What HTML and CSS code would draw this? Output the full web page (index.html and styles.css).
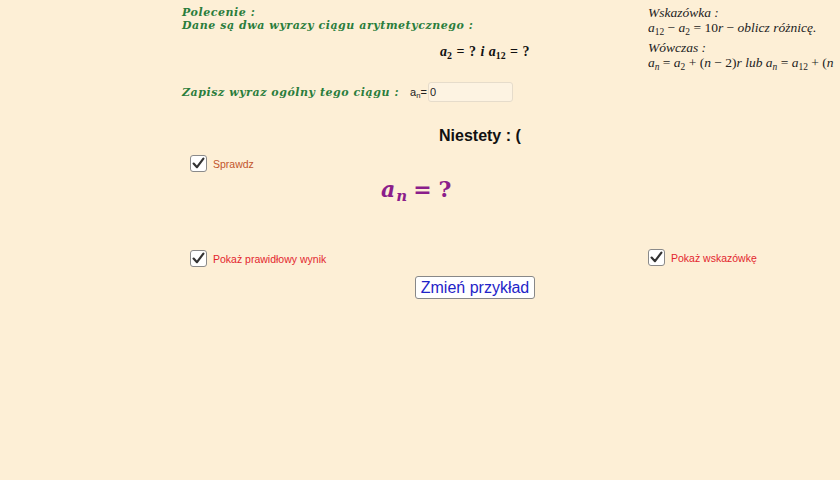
FILE: index.html
```html
<!DOCTYPE html>
<html lang="pl">
<head>
<meta charset="utf-8">
<link rel="stylesheet" href="styles.css">
</head>
<body>
<div class="page">
  <div class="left">
    <div class="task">
      <div class="gline">Polecenie :</div>
      <div class="gline">Dane są dwa wyrazy ciągu arytmetycznego :</div>
    </div>
    <div class="given"><span class="mv">a</span><sub>2</sub> = ? <span class="mv">i</span> <span class="mv">a</span><sub>12</sub> = ?</div>
    <div class="write">
      <span class="gline">Zapisz wyraz ogólny tego ciągu :</span>
      <span class="lbl">a<sub>n</sub>=</span>
      <span class="field">0</span>
    </div>
    <div class="sorry">Niestety : (</div>
    <div class="check check-first">
      <span class="box"><svg viewBox="0 0 17 17" width="17" height="17"><path d="M3.6 8.6 L7 12.2 L13.4 3.6" fill="none" stroke="#333" stroke-width="2.2" stroke-linecap="round" stroke-linejoin="round"/></svg></span>
      <span class="clabel orange">Sprawdz</span>
    </div>
    <div class="answer"><span class="mv">a</span><sub class="an">n</sub><span class="eq">=</span><span class="q">?</span></div>
    <div class="check check-result">
      <span class="box"><svg viewBox="0 0 17 17" width="17" height="17"><path d="M3.6 8.6 L7 12.2 L13.4 3.6" fill="none" stroke="#333" stroke-width="2.2" stroke-linecap="round" stroke-linejoin="round"/></svg></span>
      <span class="clabel red">Pokaż prawidłowy wynik</span>
    </div>
    <div class="btnrow"><button class="btn">Zmień przykład</button></div>
  </div>
  <div class="right">
    <div class="hint">
      <div class="hl"><i>Wskazówka :</i></div>
      <div class="hl"><i>a</i><sub>12</sub> − <i>a</i><sub>2</sub> = 10<i>r</i> − <i>oblicz różnicę.</i></div>
      <div class="hl hl-gap"><i>Wówczas :</i></div>
      <div class="hl"><i>a<sub>n</sub></i> = <i>a</i><sub>2</sub> + (<i>n</i> − 2)<i>r</i> <i>lub</i> <i>a<sub>n</sub></i> = <i>a</i><sub>12</sub> + (<i>n</i></div>
    </div>
    <div class="check check-hint">
      <span class="box"><svg viewBox="0 0 17 17" width="17" height="17"><path d="M3.6 8.6 L7 12.2 L13.4 3.6" fill="none" stroke="#333" stroke-width="2.2" stroke-linecap="round" stroke-linejoin="round"/></svg></span>
      <span class="clabel red">Pokaż wskazówkę</span>
    </div>
  </div>
</div>
</body>
</html>
```

FILE: styles.css
```css
html, body {
  margin: 0;
  padding: 0;
  background: #fdefd6;
  width: 840px;
  height: 480px;
  overflow: hidden;
}
.page {
  display: flex;
  width: 840px;
  height: 480px;
  overflow: hidden;
}
.left {
  width: 466px;
  padding-left: 182px;
  flex: none;
}
.right {
  flex: 1;
  min-width: 0;
  overflow: hidden;
}
.task {
  padding-top: 6px;
}
.gline {
  font-family: "DejaVu Serif", serif;
  font-style: italic;
  font-weight: bold;
  font-size: 11px;
  line-height: 13px;
  color: #2a7d3c;
  letter-spacing: 0.55px;
  white-space: nowrap;
}
.given {
  height: 40px;
  line-height: 40px;
  padding-left: 258px;
  font-family: "Liberation Serif", serif;
  font-weight: bold;
  font-size: 14px;
  word-spacing: 1px;
  color: #111;
  white-space: nowrap;
}
.mv {
  font-style: italic;
}
sub {
  font-size: 0.7em;
  line-height: 0;
  vertical-align: -0.3em;
}
.write {
  height: 40px;
  display: flex;
  align-items: center;
}
.lbl {
  margin-left: 11px;
  font-family: "Liberation Sans", sans-serif;
  font-size: 11px;
  color: #222;
}
.field {
  box-sizing: border-box;
  width: 85px;
  height: 20px;
  margin-left: 1px;
  background: #fdf3e2;
  border: 1px solid #e6dccb;
  border-radius: 3px;
  font-family: "Liberation Sans", sans-serif;
  font-size: 11px;
  line-height: 18px;
  padding-left: 1px;
  color: #222;
}
.sorry {
  margin-top: 6px;
  height: 36px;
  line-height: 36px;
  padding-left: 257px;
  font-family: "Liberation Sans", sans-serif;
  font-weight: bold;
  font-size: 16px;
  color: #111;
}
.check {
  display: flex;
  align-items: center;
  height: 19px;
}
.check-first {
  padding-left: 8px;
}
.check-result {
  margin-top: 45px;
  padding-left: 8px;
  height: 17px;
}
.box {
  box-sizing: border-box;
  width: 17px;
  height: 17px;
  border: 1px solid #8a8a8a;
  border-radius: 3px;
  background: #fff;
  display: flex;
  align-items: center;
  justify-content: center;
  flex: none;
}
.box svg {
  display: block;
  margin: -1px;
}
.clabel {
  margin-left: 6px;
  font-family: "Liberation Sans", sans-serif;
  font-size: 10.5px;
}
.orange { color: #c2552c; }
.red { color: #e3262e; }
.answer {
  height: 32px;
  line-height: 32px;
  padding-left: 199px;
  font-family: "DejaVu Serif", serif;
  font-weight: bold;
  font-size: 22px;
  color: #8b1e8b;
  white-space: nowrap;
}
.an {
  font-style: italic;
  font-size: 0.68em;
  margin-left: 1px;
}
.eq {
  margin-left: 6px;
}
.q {
  margin-left: 7px;
}
.btnrow {
  margin-top: 9px;
  padding-left: 233px;
}
.btn {
  box-sizing: border-box;
  width: 120px;
  height: 23px;
  padding: 0;
  background: #fff;
  border: 1px solid #888;
  border-radius: 3px;
  font-family: "Liberation Sans", sans-serif;
  font-size: 16px;
  color: #1f24c8;
  line-height: 20px;
}
.hint {
  padding-top: 5px;
  font-family: "Liberation Serif", serif;
  font-size: 13.5px;
  color: #222;
  white-space: nowrap;
}
.hl {
  line-height: 15px;
  height: 15px;
}
.hl-gap {
  margin-top: 5px;
}
.check-hint {
  margin-top: 179px;
  height: 17px;
}
```
